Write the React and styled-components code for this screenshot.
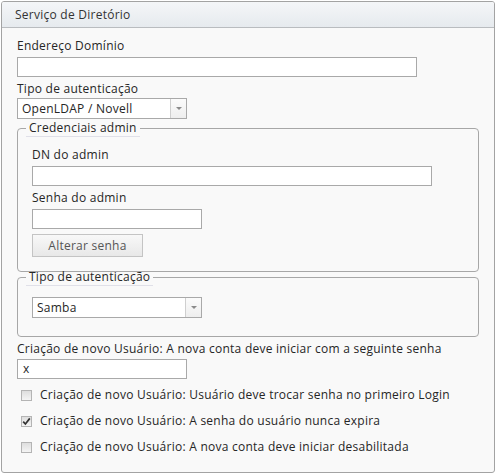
import React from 'react';
import styled, { createGlobalStyle } from 'styled-components';

const GlobalStyle = createGlobalStyle`
  html, body {
    margin: 0;
    padding: 0;
    background: #ffffff;
  }
  body {
    font-family: "Open Sans", "DejaVu Sans", sans-serif;
    font-size: 12px;
    letter-spacing: 0.25px;
    color: #262626;
  }
`;

const Panel = styled.div`
  margin: 1px;
  width: 494px;
  height: 472px;
  box-sizing: border-box;
  border: 1px solid #a3a3a3;
  border-radius: 3px;
  background: #f9f9f9;
  overflow: hidden;
`;

const Header = styled.div`
  height: 25px;
  line-height: 25px;
  padding-left: 13px;
  background: linear-gradient(#f4f6f8, #e6eaee);
  border-bottom: 1px solid #b9bcbf;
  color: #333;
`;

const Body = styled.div`
  padding: 10px 0 0 15px;
`;

const Label = styled.div`
  line-height: 16px;
  margin-top: ${(p) => p.before ?? 0}px;
  margin-bottom: ${(p) => p.gap ?? 3}px;
`;

const TextInput = styled.div`
  box-sizing: border-box;
  width: ${(p) => p.width}px;
  height: 20px;
  line-height: 18px;
  padding-left: 5px;
  border: 1px solid #a9a9a9;
  background: #ffffff;
  margin-bottom: ${(p) => p.after ?? 4}px;
`;

const Select = styled.div`
  box-sizing: border-box;
  display: flex;
  width: ${(p) => p.width}px;
  height: 21px;
  border: 1px solid #a9a9a9;
  background: #ffffff;
`;

const SelectText = styled.div`
  flex: 1;
  line-height: 19px;
  padding-left: 4px;
`;

const SelectArrow = styled.div`
  width: 15px;
  border-left: 1px solid #cfcfcf;
  background: linear-gradient(#fbfbfb, #eeeeee);
  display: flex;
  align-items: center;
  justify-content: center;
  &::after {
    content: '';
    border-left: 3px solid transparent;
    border-right: 3px solid transparent;
    border-top: 3px solid #8a8a8a;
  }
`;

const Group = styled.fieldset`
  margin: ${(p) => p.top}px 0 0 0;
  padding: 0;
  width: 462px;
  box-sizing: border-box;
  border: 1px solid #a7a7a7;
  border-radius: 4px;
`;

const Legend = styled.legend`
  margin-left: 8px;
  padding: 0 3px 0 3px;
  line-height: 16px;
  border-bottom: 1px solid #e0e0e8;
`;

const GroupBody = styled.div`
  padding: ${(p) => p.pad};
`;

const Button = styled.div`
  box-sizing: border-box;
  width: 111px;
  height: 23px;
  line-height: 21px;
  text-align: center;
  color: #555;
  border: 1px solid #c4c4c4;
  background: linear-gradient(#f8f8f8, #e8e8e8);
`;

const CheckList = styled.div`
  display: flex;
  flex-direction: column;
  gap: 10px;
  padding: 4px 0 0 4px;
`;

const CheckRow = styled.div`
  display: flex;
  align-items: center;
  gap: 8px;
  height: 16px;
  line-height: 16px;
`;

const Box = styled.span`
  flex: none;
  width: 9px;
  height: 9px;
  border: 1px solid #b4b4b4;
  background: linear-gradient(#dedede, #f4f4f4);
  display: flex;
  align-items: center;
  justify-content: center;
`;

const Checkbox = ({ checked }) => (
  <Box>
    {checked && (
      <svg width="9" height="9" viewBox="0 0 9 9">
        <path d="M1.2 4.6 L3.4 7 L7.8 1.4" fill="none" stroke="#333" strokeWidth="1.7" />
      </svg>
    )}
  </Box>
);

const options = [
  { label: 'Criação de novo Usuário: Usuário deve trocar senha no primeiro Login', checked: false },
  { label: 'Criação de novo Usuário: A senha do usuário nunca expira', checked: true },
  { label: 'Criação de novo Usuário: A nova conta deve iniciar desabilitada', checked: false },
];

export default function App() {
  return (
    <>
      <GlobalStyle />
      <Panel>
        <Header>Serviço de Diretório</Header>
        <Body>
          <Label>Endereço Domínio</Label>
          <TextInput width={400} />
          <Label gap={1}>Tipo de autenticação</Label>
          <Select width={170}>
            <SelectText>OpenLDAP / Novell</SelectText>
            <SelectArrow />
          </Select>
          <Group top={1}>
            <Legend>Credenciais admin</Legend>
            <GroupBody pad="10px 14px 14px">
              <Label>DN do admin</Label>
              <TextInput width={400} />
              <Label>Senha do admin</Label>
              <TextInput width={170} after={5} />
              <Button>Alterar senha</Button>
            </GroupBody>
          </Group>
          <Group top={-3}>
            <Legend>Tipo de autenticação</Legend>
            <GroupBody pad="11px 14px 18px">
              <Select width={170}>
                <SelectText>Samba</SelectText>
                <SelectArrow />
              </Select>
            </GroupBody>
          </Group>
          <Label gap={2} before={4}>
            Criação de novo Usuário: A nova conta deve iniciar com a seguinte senha
          </Label>
          <TextInput width={170}>x</TextInput>
          <CheckList>
            {options.map((o) => (
              <CheckRow key={o.label}>
                <Checkbox checked={o.checked} />
                {o.label}
              </CheckRow>
            ))}
          </CheckList>
        </Body>
      </Panel>
    </>
  );
}
